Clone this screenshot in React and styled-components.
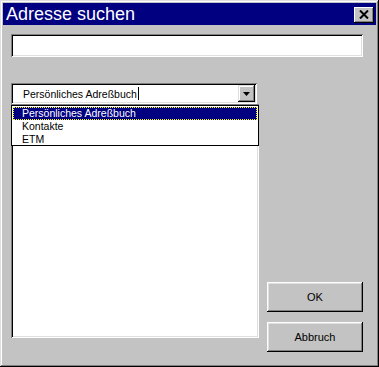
import styled, { createGlobalStyle } from "styled-components";

const GlobalStyle = createGlobalStyle`
  html, body {
    margin: 0;
    padding: 0;
    background: #c3c3c3;
  }
  body {
    font-family: "Liberation Sans", Arial, sans-serif;
  }
`;

const Window = styled.div`
  box-sizing: border-box;
  width: 379px;
  height: 367px;
  padding: 3px;
  background: #c3c3c3;
  box-shadow: inset -1px -1px #000, inset 1px 1px #dfdfdf,
    inset -2px -2px #808080, inset 2px 2px #fff;
  display: flex;
  flex-direction: column;
`;

const TitleBar = styled.div`
  height: 22px;
  background: #000080;
  display: flex;
  align-items: center;
  justify-content: space-between;
  padding: 0 2px;
`;

const Title = styled.span`
  color: #fff;
  font-size: 18px;
  line-height: 22px;
  padding-left: 1px;
`;

const CloseButton = styled.div`
  box-sizing: border-box;
  width: 20px;
  height: 16px;
  margin-top: 1px;
  background: #c3c3c3;
  box-shadow: inset -1px -1px #000, inset 1px 1px #fff,
    inset -2px -2px #808080;
  display: flex;
  align-items: center;
  justify-content: center;
`;

const Body = styled.div`
  display: flex;
  flex-direction: column;
  padding: 9px 13px 0 8px;
`;

const sunken = `
  box-sizing: border-box;
  background: #fff;
  box-shadow: inset 1px 1px #808080, inset -1px -1px #fff,
    inset 2px 2px #000, inset -2px -2px #dfdfdf;
`;

const TextInput = styled.div`
  ${sunken}
  height: 23px;
`;

const MainRow = styled.div`
  display: flex;
  gap: 8px;
  margin-top: 26px;
`;

const LeftColumn = styled.div`
  position: relative;
  width: 248px;
  display: flex;
  flex-direction: column;
`;

const Combo = styled.div`
  ${sunken}
  width: 246px;
  height: 21px;
  display: flex;
  align-items: center;
  padding: 2px;
`;

const ComboText = styled.span`
  flex: 1;
  padding-left: 10px;
  font-size: 10.5px;
  color: #000;
  display: flex;
  align-items: center;
`;

const Caret = styled.span`
  display: inline-block;
  width: 1px;
  height: 13px;
  background: #000;
  margin-left: 1px;
`;

const ArrowButton = styled.div`
  box-sizing: border-box;
  width: 17px;
  height: 17px;
  background: #c3c3c3;
  box-shadow: inset -1px -1px #000, inset 1px 1px #dfdfdf,
    inset -2px -2px #808080, inset 2px 2px #fff;
  display: flex;
  align-items: center;
  justify-content: center;
`;

const ListBox = styled.div`
  ${sunken}
  width: 248px;
  height: 234px;
`;

const Dropdown = styled.div`
  position: absolute;
  top: 22px;
  left: 0;
  box-sizing: border-box;
  width: 248px;
  height: 41px;
  border: 1px solid #000;
  background: #fff;
  padding: 1px;
`;

const Item = styled.div`
  height: 13px;
  line-height: 13px;
  padding-left: 9px;
  font-size: 10.5px;
  color: ${(p) => (p.$selected ? "#fff" : "#000")};
  background: ${(p) => (p.$selected ? "#000080" : "transparent")};
  outline: ${(p) => (p.$selected ? "1px dotted #ffff00" : "none")};
  outline-offset: -1px;
`;

const ButtonColumn = styled.div`
  display: flex;
  flex-direction: column;
  gap: 10px;
  padding-top: 199px;
`;

const Button = styled.div`
  box-sizing: border-box;
  width: 96px;
  height: 30px;
  background: #c3c3c3;
  box-shadow: inset -1px -1px #000, inset 1px 1px #fff,
    inset -2px -2px #808080, inset 2px 2px #dfdfdf;
  display: flex;
  align-items: center;
  justify-content: center;
  font-size: 11px;
  color: #000;
`;

const items = ["Persönliches Adreßbuch", "Kontakte", "ETM"];

export default function App() {
  return (
    <>
      <GlobalStyle />
      <Window>
        <TitleBar>
          <Title>Adresse suchen</Title>
          <CloseButton>
            <svg width="10" height="9" viewBox="0 0 10 9">
              <path d="M1 0.5l8 8M9 0.5l-8 8" stroke="#000" strokeWidth="2" />
            </svg>
          </CloseButton>
        </TitleBar>
        <Body>
          <TextInput />
          <MainRow>
            <LeftColumn>
              <Combo>
                <ComboText>
                  Persönliches Adreßbuch
                  <Caret />
                </ComboText>
                <ArrowButton>
                  <svg width="7" height="4" viewBox="0 0 7 4">
                    <path d="M0 0h7L3.5 4z" fill="#000" />
                  </svg>
                </ArrowButton>
              </Combo>
              <ListBox />
              <Dropdown>
                {items.map((it, i) => (
                  <Item key={it} $selected={i === 0}>
                    {it}
                  </Item>
                ))}
              </Dropdown>
            </LeftColumn>
            <ButtonColumn>
              <Button>OK</Button>
              <Button>Abbruch</Button>
            </ButtonColumn>
          </MainRow>
        </Body>
      </Window>
    </>
  );
}
